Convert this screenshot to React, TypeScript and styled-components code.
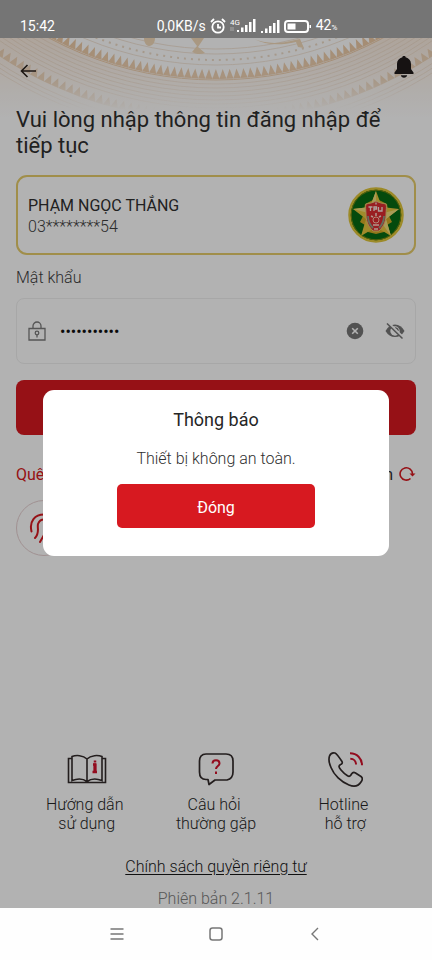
import React from 'react';
import styled, { createGlobalStyle } from 'styled-components';

const GlobalStyle = createGlobalStyle`
  *, *::before, *::after { box-sizing: border-box; }
  body {
    margin: 0;
    font-family: Roboto, "Liberation Sans", sans-serif;
    font-size: 16px;
    line-height: 19px;
    color: #303030;
    background: #fff;
  }
  button, input { font: inherit; color: inherit; }
  h1, h2, p { margin: 0; font-weight: 400; }
`;

const RED = '#d71920';

const Phone = styled.div`
  display: flex;
  flex-direction: column;
  min-height: 100vh;
`;

const StatusBar = styled.div`
  display: grid;
  grid-template-columns: 1fr auto 1fr;
  align-items: end;
  height: 38px;
  padding: 0 20px 4px;
  background: #757575;
  color: #fff;
  font-size: 14px;
`;

const StatusGroup = styled.div`
  display: flex;
  align-items: center;
  gap: 4px;
  height: 16px;
  padding-left: 62px;
  line-height: 16px;

  svg { display: block; }
`;

const StatusTime = styled.span`
  height: 16px;
  line-height: 16px;
`;

const Battery = styled.span`
  display: flex;
  align-items: baseline;
`;

const Percent = styled.small`
  font-size: 8px;
`;

const Screen = styled.main`
  position: relative;
  flex: 1;
  display: flex;
  flex-direction: column;
  background: #fff;
`;

const Pattern = styled.svg`
  position: absolute;
  top: 0;
  left: 0;
  width: 100%;
  height: 80px;
`;

const Content = styled.div`
  position: relative;
  flex: 1;
  display: flex;
  flex-direction: column;
  padding: 0 16px;
`;

const TopBar = styled.header`
  display: flex;
  align-items: flex-start;
  justify-content: space-between;
  height: 69px;
  padding-top: 17px;
`;

const IconButton = styled.button<{ $height?: number }>`
  display: flex;
  align-items: center;
  justify-content: center;
  width: 24px;
  height: ${(p) => p.$height ?? 24}px;
  padding: 0;
  border: 0;
  background: none;
`;

const Heading = styled.h1`
  font-size: 22px;
  line-height: 26px;
`;

const AccountCard = styled.section`
  display: flex;
  align-items: center;
  justify-content: space-between;
  height: 80px;
  margin-top: 16px;
  padding: 0 10px;
  border: 2px solid #e6cc6a;
  border-radius: 11px;
`;

const AccountText = styled.div`
  padding-top: 2px;
  line-height: 21px;
`;

const AccountNumber = styled.div`
  color: #404040;
  font-weight: 300;
`;

const FieldLabel = styled.label`
  margin-top: 13px;
  line-height: 20px;
  color: #404040;
  font-weight: 300;
`;

const PasswordBox = styled.div`
  display: flex;
  align-items: center;
  height: 66px;
  margin-top: 10px;
  padding: 0 8px;
  border: 1px solid #f0f0f0;
  border-radius: 8px;
`;

const PasswordInput = styled.input`
  flex: 1;
  min-width: 0;
  height: 32px;
  margin-left: 11px;
  padding: 0;
  border: 0;
  outline: 0;
  background: none;
  color: #111;
`;

const FieldActions = styled.div`
  display: flex;
  gap: 16px;
`;

const LoginButton = styled.button`
  height: 55px;
  margin-top: 16px;
  border: 0;
  border-radius: 8px;
  background: ${RED};
`;

const LinkRow = styled.div`
  display: flex;
  align-items: center;
  justify-content: space-between;
  height: 20px;
  margin-top: 29px;
`;

const TextLink = styled.a<{ $accent?: boolean }>`
  display: flex;
  align-items: center;
  gap: 6px;
  color: ${(p) => (p.$accent ? RED : '#303030')};
  text-decoration: none;
`;

const FingerprintButton = styled.button`
  display: flex;
  align-items: center;
  justify-content: center;
  width: 56px;
  height: 56px;
  margin-top: 16px;
  padding: 0;
  border: 1px solid #e6d0d1;
  border-radius: 50%;
  background: none;
`;

const Footer = styled.footer`
  margin-top: auto;
  display: flex;
  flex-direction: column;
  align-items: center;
  font-weight: 300;
`;

const HelpRow = styled.nav`
  display: grid;
  grid-template-columns: repeat(3, 1fr);
  width: 100%;
  padding: 0 6px;
`;

const HelpLink = styled.a`
  display: flex;
  flex-direction: column;
  align-items: center;
  gap: 8px;
  color: #262626;
  text-align: center;
  text-decoration: none;
  white-space: pre;
`;

const PolicyLink = styled.a`
  margin-top: 24px;
  line-height: 20px;
  color: #181818;
  text-underline-offset: 2px;
`;

const Version = styled.p`
  margin-top: 13px;
  line-height: 18px;
  color: #808080;
  font-weight: 300;
`;

const Backdrop = styled.div`
  position: absolute;
  inset: 0;
  display: flex;
  align-items: center;
  justify-content: center;
  background: rgba(0, 0, 0, 0.3);
`;

const Dialog = styled.section`
  display: flex;
  flex-direction: column;
  align-items: center;
  width: 80%;
  padding: 19px 16px 28px;
  border-radius: 11px;
  background: #fff;
`;

const DialogTitle = styled.h2`
  font-size: 18px;
  line-height: 22px;
  color: #262626;
`;

const DialogText = styled.p`
  margin-top: 18px;
  line-height: 20px;
  color: #303030;
  font-weight: 300;
`;

const DialogButton = styled.button`
  width: 63%;
  height: 44px;
  margin-top: 15px;
  padding: 2px 0 0;
  border: 0;
  border-radius: 5px;
  background: ${RED};
  color: #fff;
`;

const NavBar = styled.nav`
  display: flex;
  align-items: center;
  justify-content: space-between;
  height: 52px;
  padding: 0 calc(50% - 111px);
  background: #fefefe;
`;

const point = (r: number, deg: number) => {
  const a = (deg * Math.PI) / 180;
  return `${(216 + r * Math.sin(a)).toFixed(1)} ${(-311 + r * Math.cos(a)).toFixed(1)}`;
};

const teeth = (r: number, height: number, step: number) => {
  const parts: string[] = [];
  for (let a = -42; a < 42; a += step) {
    parts.push(`M${point(r, a)}L${point(r - height, a + step / 2)}L${point(r, a + step)}Z`);
  }
  return parts.join('');
};

const RINGS = [322, 327, 338, 357, 361, 365, 369, 373, 377, 381, 400, 404, 408];

function DrumPattern() {
  return (
    <Pattern viewBox="0 0 432 80" preserveAspectRatio="xMidYMin slice" aria-hidden="true">
      <defs>
        <linearGradient id="fade" x1="0" y1="0" x2="0" y2="1">
          <stop offset="0" stopColor="#fff" />
          <stop offset="0.5" stopColor="#fff" stopOpacity="0.8" />
          <stop offset="0.9" stopColor="#fff" stopOpacity="0" />
        </linearGradient>
        <linearGradient id="sand" x1="0" y1="0" x2="0" y2="1">
          <stop offset="0" stopColor="#f9ebdf" />
          <stop offset="1" stopColor="#fff" />
        </linearGradient>
        <mask id="fadeMask" maskUnits="userSpaceOnUse" x="0" y="0" width="432" height="80">
          <rect width="432" height="80" fill="url(#fade)" />
        </mask>
      </defs>
      <path d="M0 0H55A352 352 0 0 0 377 0H432V80H0Z" fill="url(#sand)" />
      <g mask="url(#fadeMask)" fill="none" stroke="#ecd9c4">
        {RINGS.map((r) => (
          <circle key={r} cx="216" cy="-311" r={r} strokeOpacity="0.7" />
        ))}
        <circle cx="216" cy="-311" r="333" strokeWidth="2" strokeDasharray="2 5" />
        <path d={teeth(352, 10, 1.15)} fill="#ecc9a4" stroke="none" />
        <circle cx="216" cy="-311" r="353" stroke="#ecc9a4" />
        <path d={teeth(394, 9, 1.15)} fill="#ecd0b2" stroke="none" />
        <path
          d="M144 0c0 4 2 8 5 8c4 0 6-4 6-8zM191 0h13l-6 9l7 6c-5 2-9 1-13-1l5-6zM252 0c9 5 25 7 43 2l5-1l4 9l-6-1l-2-5c-17 4-32 3-44-4z"
          fill="#f2d9b8"
          stroke="none"
        />
      </g>
    </Pattern>
  );
}

function Signal() {
  return (
    <svg width="19" height="13" viewBox="0 0 19 13" fill="#fff" aria-hidden="true">
      <path d="M0 11h2v2H0zM4 8.500h2.500v4.500H4zM8 6h2.500v7H8zM12 3h2.500v10H12zM16 0h2.500v13H16z" />
    </svg>
  );
}

function Emblem() {
  return (
    <svg width="56" height="56" viewBox="0 0 56 56" role="img" aria-label="Huy hiệu">
      <circle cx="28" cy="28" r="26.5" fill="#066a14" stroke="#e0c63a" strokeWidth="2.500" />
      <circle cx="28" cy="28" r="24.800" fill="none" stroke="#7d8a10" />
      <path d="M17 17l6-3 5-2 5 2 6 3 2 12 3 6-5 3-3 7-8 2-8-2-3-7-5-3 3-6z" fill="#d4ab26" />
      <path d="M28 4L34 20L51 22L38 32L43 49L28 40L13 49L18 32L5 22L22 20Z" fill="#e6c63e" />
      <path d="M28 4V28L5 22L22 20ZM51 22L28 28L43 49L38 32Z" fill="#f3de7c" />
      <path d="M18 17c4-1 7-1 10-3c3 2 6 2 10 3c1 3 0 6 0 11c0 8-4 13-7 16h-6c-3-3-7-8-7-16c0-5-1-8 0-11z" fill="#dc2c30" stroke="#e8c878" />
      <path d="M20.500 20h4m-2 0v4m3.500 0v-4h2.500v2h-2.500m4.500-2v4h3.500v-4M28 15.500v2" fill="none" stroke="#fbe9e2" strokeWidth="1.300" />
      <path d="M20 29c0 5 2 9 5 12m11-12c0 5-2 9-5 12" fill="none" stroke="#8f9f86" strokeWidth="1.800" />
      <path d="M28 26v3m-5 0l2 1m8-1l-2 1m-6 8h6m-5 4h4" fill="none" stroke="#ffd9ca" strokeWidth="1.500" />
      <circle cx="28" cy="33" r="3" fill="none" stroke="#ffc1a6" />
    </svg>
  );
}

export default function App() {
  return (
    <>
      <GlobalStyle />
      <Phone>
        <StatusBar>
          <StatusTime>15:42</StatusTime>
          <StatusGroup>
            <span>0,0KB/s</span>
            <svg width="16" height="16" viewBox="0 0 16 16" fill="none" stroke="#fff" strokeWidth="1.8" aria-hidden="true">
              <circle cx="8" cy="9" r="5.7" />
              <path d="M8 6v3.500h3M1 4l3-3M15 4l-3-3" />
            </svg>
            <svg width="27" height="16" viewBox="0 0 27 16" fill="#fff" aria-hidden="true">
              <text x="0" y="7" fontSize="8">4G</text>
              <path d="M1 9v4m2-4v4" stroke="#aaa" />
              <path d="M7 12h2v2H7zM11 9.500h2.500v4.500H11zM15 7h2.500v7H15zM19 4h2.500v10H19zM23 1h2.500v13H23z" />
            </svg>
            <Signal />
            <svg width="28" height="13" viewBox="0 0 28 13" aria-hidden="true">
              <rect x="1" y="1" width="23" height="11" rx="3" fill="none" stroke="#fff" strokeWidth="2" />
              <path d="M3.500 3.500h8v6h-8zM25.500 5h1.500v3h-1.500z" fill="#fff" />
            </svg>
            <Battery>42<Percent>%</Percent></Battery>
          </StatusGroup>
          <span />
        </StatusBar>

        <Screen>
          <DrumPattern />
          <Content>
            <TopBar>
              <IconButton $height={32} aria-label="Quay lại">
                <svg width="16" height="14" viewBox="0 0 16 14" fill="none" stroke="#2a211c" strokeWidth="1.6">
                  <path d="M16 7H1.500M7.500 1L1.500 7L7.500 13" />
                </svg>
              </IconButton>
              <IconButton aria-label="Thông báo">
                <svg width="20" height="22" viewBox="0 0 20 22" fill="#201b1b">
                  <path d="M10 0c-1.200 0-1.600.6-1.600 1.200C5 2 3 4.500 3 8v5L0.500 16.500V18h19v-1.500L17 13V8c0-3.500-2-6-5.400-6.800C11.600.6 11.200 0 10 0zM6.800 19.300h6.400c-.3 1.500-1.500 2.400-3.200 2.400s-2.900-.9-3.200-2.400z" />
                </svg>
              </IconButton>
            </TopBar>

            <Heading>Vui lòng nhập thông tin đăng nhập để tiếp tục</Heading>

            <AccountCard>
              <AccountText>
                <div>PHẠM NGỌC THẮNG</div>
                <AccountNumber>03********54</AccountNumber>
              </AccountText>
              <Emblem />
            </AccountCard>

            <FieldLabel htmlFor="password">Mật khẩu</FieldLabel>
            <PasswordBox>
              <IconButton as="span">
                <svg width="18" height="20" viewBox="0 0 18 20" fill="none" stroke="#7b7b7b" strokeWidth="1.300">
                  <path d="M1 7.500h16v11.500H1zM5 7.500V5a4 4 0 0 1 8 0v2.500" />
                  <circle cx="9" cy="12" r="1.800" />
                  <path d="M9 14v2.500" />
                </svg>
              </IconButton>
              <PasswordInput id="password" type="password" defaultValue="matkhau2024" />
              <FieldActions>
                <IconButton aria-label="Xóa mật khẩu">
                  <svg width="18" height="18" viewBox="0 0 18 18">
                    <circle cx="9" cy="9" r="8.300" fill="#767676" />
                    <path d="M6.200 6.200l5.600 5.600m0-5.600l-5.600 5.600" stroke="#fff" strokeWidth="1.600" />
                  </svg>
                </IconButton>
                <IconButton aria-label="Hiện mật khẩu">
                  <svg width="20" height="16" viewBox="0 0 20 16" fill="none">
                    <path d="M0.500 8Q4 1.500 10 1.500T19.500 8Q16 14 10 14T0.500 8Z" fill="#767676" />
                    <circle cx="10" cy="8" r="4.700" fill="#fff" />
                    <path d="M10 5a3 3 0 0 1 3 3" stroke="#767676" strokeWidth="1.500" />
                    <path d="M3.500 0l15 15" stroke="#fff" strokeWidth="2.500" />
                    <path d="M2 0.500l15.500 15" stroke="#767676" strokeWidth="1.500" />
                  </svg>
                </IconButton>
              </FieldActions>
            </PasswordBox>

            <LoginButton aria-label="Đăng nhập" />

            <LinkRow>
              <TextLink href="#forgot" $accent>Quên mật khẩu?</TextLink>
              <TextLink href="#switch">
                Đổi tài khoản
                <svg width="17" height="16" viewBox="0 0 17 16" fill="none" stroke={RED} strokeWidth="1.600" aria-hidden="true">
                  <path d="M11.500 12.500A6.200 6.200 0 1 1 13.500 8" />
                  <path d="M10.500 7.500l3 3L16.500 7.500" fill={RED} stroke="none" />
                </svg>
              </TextLink>
            </LinkRow>

            <FingerprintButton aria-label="Đăng nhập bằng vân tay">
              <svg width="30" height="30" viewBox="0 0 30 30" fill="none" stroke={RED} strokeWidth="2" strokeLinecap="round">
                <path d="M2.500 18.500C0 8 6 1.500 15 1.500c8 0 14 7 12.500 17M6 25c5-5 2-10 3-14c1-3 3-4.500 6-4.500c7 0 8 8 6 18M11 29l4-7" />
              </svg>
            </FingerprintButton>

            <Footer>
              <HelpRow>
                <HelpLink href="#guide">
                  <svg width="40" height="36" viewBox="0 0 40 36" fill="none" stroke="#332b2b" strokeWidth="1.600">
                    <path d="M5 7.500H1.500v24H38.500v-24H35M20 8C16 4 9 4 5 5.500v24c5-2 11-2 15 1c4-3 10-3 15-1v-24C31 4 24 4 20 8v23" />
                    <path d="M26 13.500h2v7M25.500 21h4.500M28 9.500v2" stroke="#d3122c" strokeWidth="2.500" />
                    <path d="M28 12.500v8.500" stroke="#d3122c" strokeWidth="3" />
                  </svg>
                  <span>{'Hướng dẫn \nsử dụng'}</span>
                </HelpLink>
                <HelpLink href="#faq">
                  <svg width="36" height="36" viewBox="0 0 36 36" fill="none" stroke="#332b2b" strokeWidth="1.700" strokeLinejoin="round">
                    <path d="M8 3h20c5 0 7 3 7 7v11c0 4-2 7-6 8H17l-6 4.500l-1-5H8c-5 0-6.500-3-6.500-7.500V10c0-4 2-7 6.500-7z" />
                    <path d="M14.500 12.500c0-4.500 7-4.500 7 0c0 2.500-3.500 2.500-3.500 5.500M18 20.500v2.500" stroke="#d3122c" strokeWidth="2" />
                  </svg>
                  <span>{'Câu hỏi \nthường gặp'}</span>
                </HelpLink>
                <HelpLink href="#hotline">
                  <svg width="36" height="36" viewBox="0 0 36 36" fill="none" stroke="#332b2b" strokeWidth="1.700" strokeLinejoin="round">
                    <path d="M2.500 5C3.500 2.500 6 1.500 8 2C9.500 2.500 11 4.500 15 10.500C15.700 12 15 13 13.500 13.500C11 15 12 16.500 14 19C16.500 22 18.500 23.500 20.500 24.800C22.500 26 23.500 25 24.500 23C25.500 21.500 27 21 28.500 22L34 25.500C36 27 35.500 29 34 31C31.500 35 27 36 22 34C14 31 7 24 4 16.500C2 12 1.500 8 2.500 5Z" />
                    <path d="M23 2.300c7 0 12 5 12 12M23.300 7.700c3.500 0 5.700 2.500 5.700 5.700" stroke="#d3122c" strokeWidth="2" />
                  </svg>
                  <span>{'Hotline \nhỗ trợ'}</span>
                </HelpLink>
              </HelpRow>
              <PolicyLink href="#privacy">Chính sách quyền riêng tư</PolicyLink>
              <Version>Phiên bản 2.1.11</Version>
            </Footer>
          </Content>

          <Backdrop>
            <Dialog role="dialog" aria-modal="true" aria-labelledby="dialog-title">
              <DialogTitle id="dialog-title">Thông báo</DialogTitle>
              <DialogText>Thiết bị không an toàn.</DialogText>
              <DialogButton>Đóng</DialogButton>
            </Dialog>
          </Backdrop>
        </Screen>

        <NavBar>
          <IconButton aria-label="Ứng dụng gần đây">
            <svg width="14" height="12" viewBox="0 0 14 12" fill="none" stroke="#777" strokeWidth="1.300">
              <path d="M0.500 1h13M0.500 6h13M0.500 11h13" />
            </svg>
          </IconButton>
          <IconButton aria-label="Màn hình chính">
            <svg width="14" height="14" viewBox="0 0 14 14" fill="none" stroke="#777" strokeWidth="1.500">
              <rect x="1" y="1" width="12" height="12" rx="2.500" />
            </svg>
          </IconButton>
          <IconButton aria-label="Trở về">
            <svg width="8" height="14" viewBox="0 0 8 14" fill="none" stroke="#777" strokeWidth="1.400">
              <path d="M7 1L1 7l6 6" />
            </svg>
          </IconButton>
        </NavBar>
      </Phone>
    </>
  );
}
